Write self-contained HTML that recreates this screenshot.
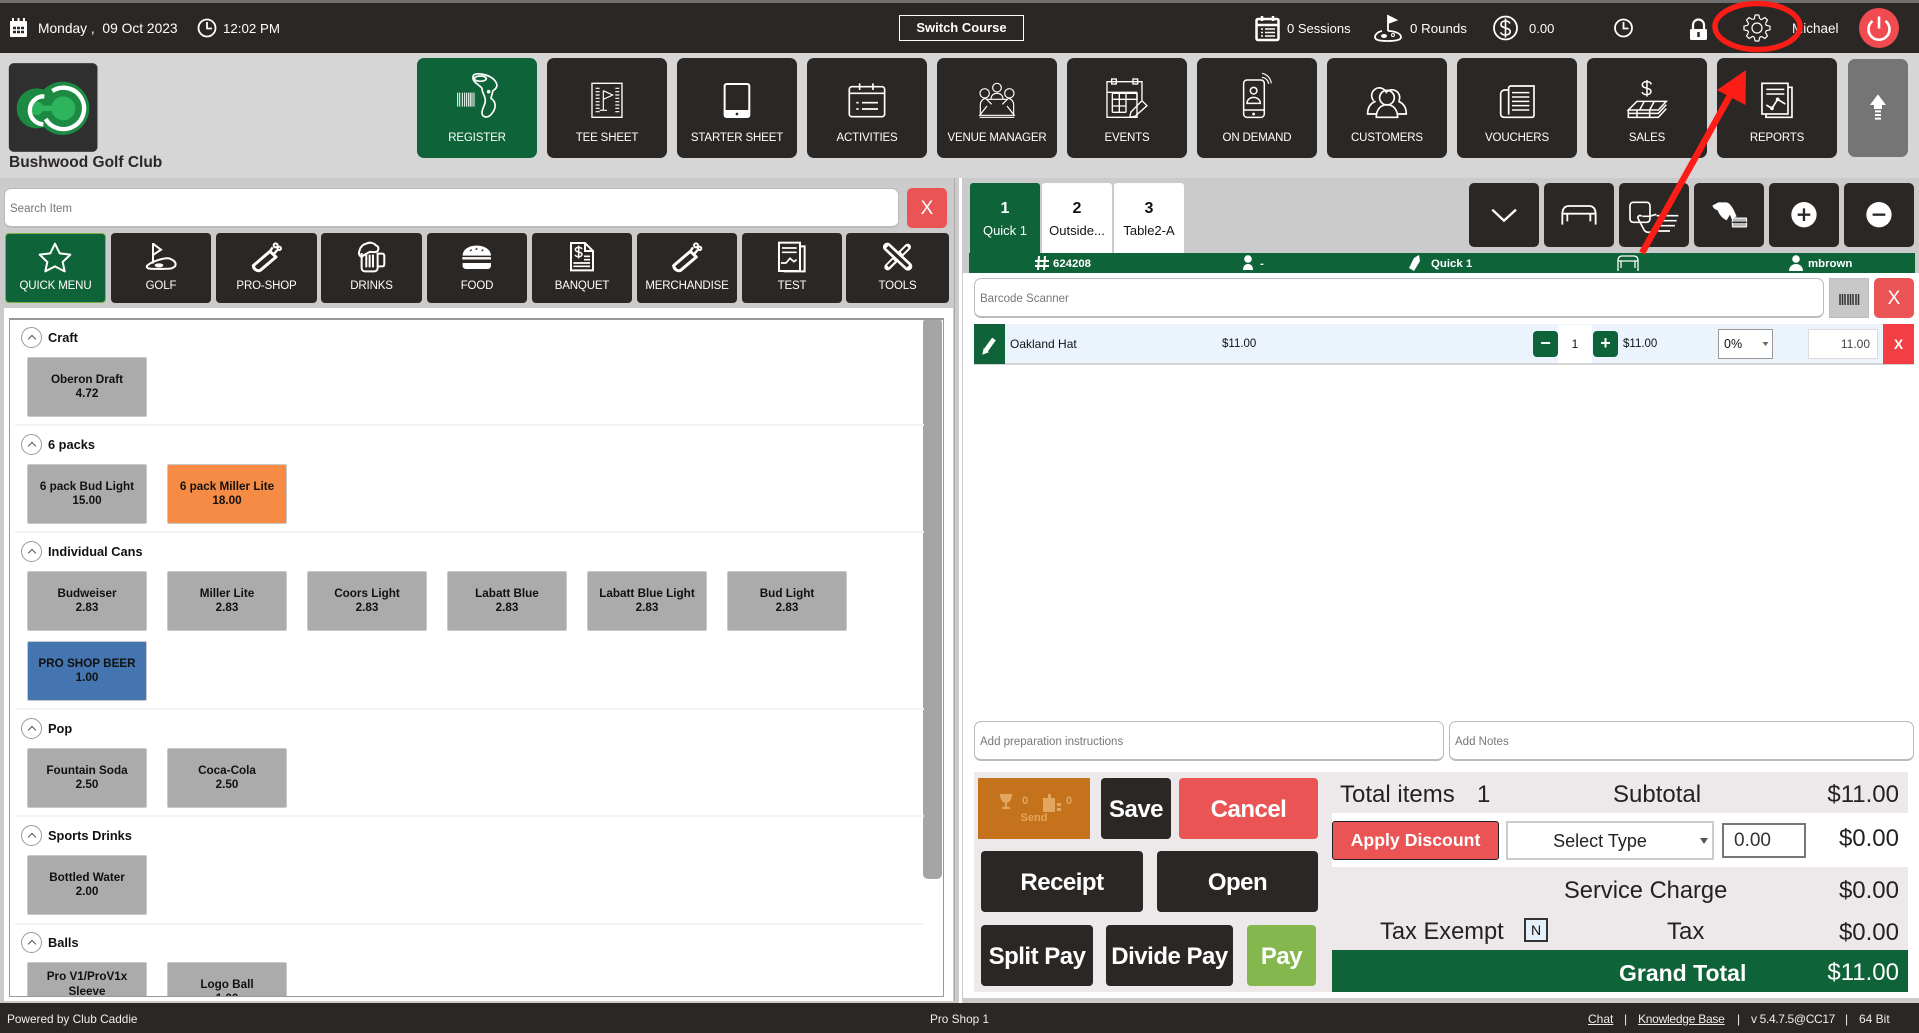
<!DOCTYPE html>
<html><head><meta charset="utf-8"><title>Club Caddie Register</title>
<style>
html,body{margin:0;padding:0;width:1919px;height:1033px;overflow:hidden;background:#cbcbcb;font-family:"Liberation Sans",sans-serif;color:#111}
.a{position:absolute;box-sizing:border-box}
.t{position:absolute;white-space:pre;line-height:20px;height:20px}
.c{text-align:center}
.w{color:#fff !important}
.dk{background:#2b2725;border-radius:5px}
.nav{position:absolute;top:58px;width:120px;height:100px;background:#2b2725;border-radius:7px;color:#fff;font-size:11.5px;letter-spacing:-.15px;text-align:center;line-height:20px;padding-top:70px;box-sizing:border-box}
.cat{position:absolute;top:233px;height:70px;background:#2b2725;border-radius:4px;color:#fff;font-size:11.5px;letter-spacing:-.15px;text-align:center;line-height:20px;padding-top:43px;box-sizing:border-box}
.it{position:absolute;width:120px;height:60px;margin-top:1px;background:#ababab;border:1px solid #c8c8c8;border-radius:2px;font-weight:bold;font-size:11.7px;line-height:14.5px;text-align:center;display:flex;align-items:center;justify-content:center;box-sizing:border-box}
.h{position:absolute;left:39px;font-weight:bold;font-size:12.8px;line-height:20px;height:20px;white-space:pre}
.cir{position:absolute;left:12px;width:21px;height:21px;border:1px solid #999;border-radius:50%;box-sizing:border-box}
.cir:after{content:"";position:absolute;left:6.5px;top:8px;width:5px;height:5px;border-left:1px solid #555;border-top:1px solid #555;transform:rotate(45deg)}
.sep{position:absolute;left:6px;width:909px;height:2px;margin-top:1px;background:#f2f2f2}
.big{position:absolute;color:#fff;font-weight:bold;font-size:24px;letter-spacing:-.5px;text-align:center;border-radius:4px;box-sizing:border-box;display:flex;align-items:center;justify-content:center;white-space:pre;padding-top:3px}
.tot{position:absolute;font-size:24px;line-height:30px;height:30px;white-space:pre;color:#222}
.r{text-align:right}
.inp{position:absolute;background:#fff;border:1px solid #bbb;border-bottom:2px solid #bbb;border-radius:7px;box-sizing:border-box;font-size:11.5px;color:#777;padding-left:5px;padding-top:2px;display:flex;align-items:center}
</style></head><body>

<div class="a" style="left:0;top:0;width:1919px;height:3px;background:#6f6f6f"></div>
<div class="a" style="left:0;top:3px;width:1919px;height:50px;background:#2b2725"></div>
<div class="a" style="left:0;top:53px;width:1919px;height:125px;background:#d6d6d6"></div>
<div class="a" style="left:0;top:1003px;width:1919px;height:30px;background:#2b2725"></div>

<!-- header text -->
<div class="t w" style="left:38px;top:19px;font-size:13.8px">Monday ,  09 Oct 2023</div>
<div class="t w" style="left:223px;top:19px;font-size:13.3px">12:02 PM</div>
<div class="a w c" style="left:899px;top:15px;width:125px;height:26px;border:1px solid #fff;font-weight:bold;font-size:13px;line-height:24px">Switch Course</div>
<div class="t w" style="left:1287px;top:19px;font-size:13px">0 Sessions</div>
<div class="t w" style="left:1410px;top:19px;font-size:13.3px">0 Rounds</div>
<div class="t w" style="left:1529px;top:19px;font-size:13px">0.00</div>
<div class="t w" style="left:1792px;top:19px;font-size:13.5px">Michael</div>

<!-- logo -->
<div class="t" style="left:9px;top:153px;font-weight:bold;font-size:15.5px;color:#2b2725">Bushwood Golf Club</div>

<!-- nav -->
<div class="nav" style="left:417px;background:#0f6339">REGISTER</div>
<div class="nav" style="left:547px">TEE SHEET</div>
<div class="nav" style="left:677px">STARTER SHEET</div>
<div class="nav" style="left:807px">ACTIVITIES</div>
<div class="nav" style="left:937px">VENUE MANAGER</div>
<div class="nav" style="left:1067px">EVENTS</div>
<div class="nav" style="left:1197px">ON DEMAND</div>
<div class="nav" style="left:1327px">CUSTOMERS</div>
<div class="nav" style="left:1457px">VOUCHERS</div>
<div class="nav" style="left:1587px">SALES</div>
<div class="nav" style="left:1717px">REPORTS</div>
<div class="a" style="left:1848px;top:59px;width:60px;height:98px;background:#757575;border-radius:7px"></div>

<!-- search -->
<div class="inp" style="left:4px;top:188px;width:895px;height:40px">Search Item</div>
<div class="a w c" style="left:907px;top:188px;width:40px;height:40px;background:#ea5455;border-radius:5px;font-size:19px;line-height:41px">X</div>

<!-- categories -->
<div class="cat" style="left:5px;width:101px;background:#0f6339;border:1px solid #7cb342;padding-top:42px">QUICK MENU</div>
<div class="cat" style="left:111px;width:100px">GOLF</div>
<div class="cat" style="left:216px;width:101px">PRO-SHOP</div>
<div class="cat" style="left:321px;width:101px">DRINKS</div>
<div class="cat" style="left:427px;width:100px">FOOD</div>
<div class="cat" style="left:532px;width:100px">BANQUET</div>
<div class="cat" style="left:637px;width:100px">MERCHANDISE</div>
<div class="cat" style="left:742px;width:100px">TEST</div>
<div class="cat" style="left:846px;width:103px">TOOLS</div>

<!-- left panel -->
<div class="a" style="left:4px;top:308px;width:949px;height:693px;background:#fff"></div>
<div class="a" style="left:954px;top:178px;width:1px;height:823px;background:#aaa"></div>
<div class="a" style="left:959px;top:178px;width:3px;height:825px;background:#fff"></div>
<div class="a" style="left:9px;top:318px;width:935px;height:679px;border:1px solid #999;border-top:2px solid #999;overflow:hidden;background:#fff">
 <div class="a" style="left:-1px;top:-2px;width:935px;height:679px">
  <div class="a" style="left:914px;top:0;width:19px;height:561px;background:#a5a5a5;border-radius:5px"></div>
  <div class="cir" style="top:9px"></div><div class="h" style="top:10px">Craft</div>
  <div class="it" style="left:18px;top:38px">Oberon Draft<br>4.72</div>
  <div class="sep" style="top:105px"></div>

  <div class="cir" style="top:116px"></div><div class="h" style="top:117px">6 packs</div>
  <div class="it" style="left:18px;top:145px">6 pack Bud Light<br>15.00</div>
  <div class="it" style="left:158px;top:145px;background:#f68b45">6 pack Miller Lite<br>18.00</div>
  <div class="sep" style="top:212px"></div>

  <div class="cir" style="top:223px"></div><div class="h" style="top:224px">Individual Cans</div>
  <div class="it" style="left:18px;top:252px">Budweiser<br>2.83</div>
  <div class="it" style="left:158px;top:252px">Miller Lite<br>2.83</div>
  <div class="it" style="left:298px;top:252px">Coors Light<br>2.83</div>
  <div class="it" style="left:438px;top:252px">Labatt Blue<br>2.83</div>
  <div class="it" style="left:578px;top:252px">Labatt Blue Light<br>2.83</div>
  <div class="it" style="left:718px;top:252px">Bud Light<br>2.83</div>
  <div class="it" style="left:18px;top:322px;background:#4475b0">PRO SHOP BEER<br>1.00</div>
  <div class="sep" style="top:389px"></div>

  <div class="cir" style="top:400px"></div><div class="h" style="top:401px">Pop</div>
  <div class="it" style="left:18px;top:429px">Fountain Soda<br>2.50</div>
  <div class="it" style="left:158px;top:429px">Coca-Cola<br>2.50</div>
  <div class="sep" style="top:496px"></div>

  <div class="cir" style="top:507px"></div><div class="h" style="top:508px">Sports Drinks</div>
  <div class="it" style="left:18px;top:536px">Bottled Water<br>2.00</div>
  <div class="sep" style="top:604px"></div>

  <div class="cir" style="top:614px"></div><div class="h" style="top:615px">Balls</div>
  <div class="it" style="left:18px;top:643px">Pro V1/ProV1x<br>Sleeve<br>1.00</div>
  <div class="it" style="left:158px;top:643px">Logo Ball<br>1.00</div>
 </div>
</div>

<!-- order tabs -->
<div class="a c w" style="left:970px;top:183px;width:70px;height:70px;background:#0f6339;border-radius:3px 3px 0 0"><div style="font-weight:bold;font-size:16px;line-height:20px;margin-top:16px">1</div><div style="font-size:13px;line-height:20px;margin-top:2px">Quick 1</div></div>
<div class="a c" style="left:1042px;top:183px;width:70px;height:70px;background:#fff;border-radius:3px 3px 0 0"><div style="font-weight:bold;font-size:16px;line-height:20px;margin-top:16px">2</div><div style="font-size:13px;line-height:20px;margin-top:2px">Outside...</div></div>
<div class="a c" style="left:1114px;top:183px;width:70px;height:70px;background:#fff;border-radius:3px 3px 0 0"><div style="font-weight:bold;font-size:16px;line-height:20px;margin-top:16px">3</div><div style="font-size:13px;line-height:20px;margin-top:2px">Table2-A</div></div>

<div class="a dk" style="left:1469px;top:183px;width:70px;height:64px"></div>
<div class="a dk" style="left:1544px;top:183px;width:70px;height:64px"></div>
<div class="a dk" style="left:1619px;top:183px;width:70px;height:64px"></div>
<div class="a dk" style="left:1694px;top:183px;width:70px;height:64px"></div>
<div class="a dk" style="left:1769px;top:183px;width:70px;height:64px"></div>
<div class="a dk" style="left:1844px;top:183px;width:70px;height:64px"></div>

<!-- right panel -->
<div class="a" style="left:963px;top:273px;width:956px;height:725px;background:#fff"></div>
<div class="a" style="left:969px;top:253px;width:946px;height:20px;background:#0f6339"></div>
<div class="t w" style="left:1053px;top:254px;font-weight:bold;font-size:11.4px">624208</div>
<div class="t w" style="left:1260px;top:254px;font-weight:bold;font-size:11.4px">-</div>
<div class="t w" style="left:1431px;top:254px;font-weight:bold;font-size:11.4px">Quick 1</div>
<div class="t w" style="left:1808px;top:254px;font-weight:bold;font-size:11.4px">mbrown</div>

<div class="inp" style="left:974px;top:278px;width:850px;height:40px">Barcode Scanner</div>
<div class="a" style="left:1829px;top:278px;width:40px;height:40px;background:#c8c8c8;border:1px solid #bbb"></div>
<div class="a w c" style="left:1874px;top:278px;width:40px;height:40px;background:#ea5455;border-radius:5px;font-size:19px;line-height:41px">X</div>

<div class="a" style="left:974px;top:324px;width:940px;height:41px;background:#ebf4fc;border-bottom:2px solid #d5d5d5"></div>
<div class="a" style="left:974px;top:324px;width:31px;height:40px;background:#0f6339"></div>
<div class="t" style="left:1010px;top:334px;font-size:12px">Oakland Hat</div>
<div class="t" style="left:1222px;top:334px;font-size:11.5px">$11.00</div>
<div class="a" style="left:1558px;top:325px;width:34px;height:38px;background:#fff"></div>
<div class="a w c" style="left:1533px;top:331px;width:25px;height:26px;background:#0f6339;border-radius:4px;font-weight:bold;font-size:18px;line-height:24px">&#8722;</div>
<div class="a w c" style="left:1593px;top:331px;width:25px;height:26px;background:#0f6339;border-radius:4px;font-weight:bold;font-size:18px;line-height:24px">+</div>
<div class="t c" style="left:1558px;top:334px;width:34px;font-size:12px">1</div>
<div class="t" style="left:1623px;top:334px;font-size:11.5px">$11.00</div>
<div class="a" style="left:1718px;top:329px;width:55px;height:30px;background:#fff;border:1px solid #999;font-size:12.5px;line-height:28px;padding-left:5px">0%</div>
<div class="a r" style="left:1808px;top:329px;width:70px;height:30px;background:#fff;border:1px solid #ddd;font-size:12px;line-height:28px;padding-right:7px;color:#444">11.00</div>
<div class="a w c" style="left:1883px;top:324px;width:31px;height:40px;background:#f33e44;font-weight:bold;font-size:14px;line-height:40px">X</div>

<div class="inp" style="left:974px;top:721px;width:470px;height:40px">Add preparation instructions</div>
<div class="inp" style="left:1449px;top:721px;width:465px;height:40px">Add Notes</div>

<!-- totals -->
<div class="a" style="left:974px;top:772px;width:934px;height:220px;background:#ede9ea"></div>
<div class="a" style="left:1332px;top:813px;width:576px;height:54px;background:#fff"></div>
<div class="big" style="left:978px;top:778px;width:112px;height:61px;background:#c4721c;font-size:11px;align-items:flex-end;padding-top:0;padding-bottom:15px;color:#e2a65e;letter-spacing:0;border-radius:1px">Send</div>
<div class="t" style="left:1022px;top:791px;font-size:11px;font-weight:bold;color:#e2a65e">0</div>
<div class="t" style="left:1066px;top:791px;font-size:11px;font-weight:bold;color:#e2a65e">0</div>
<div class="big" style="left:1101px;top:778px;width:70px;height:61px;background:#2b2725">Save</div>
<div class="big" style="left:1179px;top:778px;width:139px;height:61px;background:#ea5455">Cancel</div>
<div class="big" style="left:981px;top:851px;width:162px;height:61px;background:#2b2725">Receipt</div>
<div class="big" style="left:1157px;top:851px;width:161px;height:61px;background:#2b2725">Open</div>
<div class="big" style="left:981px;top:925px;width:112px;height:61px;background:#2b2725">Split Pay</div>
<div class="big" style="left:1106px;top:925px;width:127px;height:61px;background:#2b2725">Divide Pay</div>
<div class="big" style="left:1247px;top:925px;width:69px;height:61px;background:#84b74e">Pay</div>

<div class="tot" style="left:1340px;top:780px">Total items</div>
<div class="tot" style="left:1477px;top:780px">1</div>
<div class="tot" style="left:1613px;top:780px">Subtotal</div>
<div class="tot r" style="left:1799px;top:780px;width:100px">$11.00</div>

<div class="a w c" style="left:1332px;top:821px;width:167px;height:39px;background:#ea5455;border:1px solid #222;border-radius:3px;font-weight:bold;font-size:17.7px;line-height:37px">Apply Discount</div>
<div class="a c" style="left:1506px;top:821px;width:208px;height:39px;background:#fff;border:2px solid #ccc;font-size:18px;line-height:36px;padding-right:20px;color:#222">Select Type</div>
<div class="a" style="left:1722px;top:823px;width:84px;height:35px;background:#fff;border:2px solid #777;font-size:19px;line-height:32px;padding-left:10px;color:#333">0.00</div>
<div class="tot r" style="left:1799px;top:824px;width:100px">$0.00</div>

<div class="tot" style="left:1564px;top:876px;font-size:23.7px">Service Charge</div>
<div class="tot r" style="left:1799px;top:876px;width:100px">$0.00</div>
<div class="tot" style="left:1380px;top:917px;font-size:23.7px">Tax Exempt</div>
<div class="a c" style="left:1524px;top:918px;width:24px;height:24px;background:#e6f0fb;border:2px solid #333;font-size:14px;line-height:20px">N</div>
<div class="tot" style="left:1667px;top:917px">Tax</div>
<div class="tot r" style="left:1799px;top:918px;width:100px">$0.00</div>
<div class="a" style="left:1332px;top:950px;width:576px;height:42px;background:#0f6339"></div>
<div class="tot w" style="left:1619px;top:958px;font-weight:bold;font-size:23px">Grand Total</div>
<div class="tot r w" style="left:1799px;top:958px;width:100px">$11.00</div>

<!-- footer -->
<div class="t" style="left:7px;top:1009px;font-size:11.8px;color:#eee">Powered by Club Caddie</div>
<div class="t" style="left:930px;top:1009px;font-size:11.8px;color:#eee">Pro Shop 1</div>
<div class="t" style="left:1588px;top:1009px;font-size:12px;color:#eee;text-decoration:underline">Chat</div>
<div class="t" style="left:1624px;top:1009px;font-size:12px;color:#eee">|</div>
<div class="t" style="left:1638px;top:1009px;font-size:12px;color:#eee;text-decoration:underline;letter-spacing:-.25px">Knowledge Base</div>
<div class="t" style="left:1737px;top:1009px;font-size:12px;color:#eee">|</div>
<div class="t" style="left:1751px;top:1009px;font-size:12px;color:#eee;letter-spacing:-.35px">v 5.4.7.5@CC17</div>
<div class="t" style="left:1845px;top:1009px;font-size:12px;color:#eee">|</div>
<div class="t" style="left:1859px;top:1009px;font-size:12px;color:#eee">64 Bit</div>

<!-- icons -->
<svg class="a" style="left:0;top:0" width="1919" height="1033" viewBox="0 0 1919 1033" fill="none" stroke="#fff">
 <!-- header icons -->
 <g>
  <rect x="10" y="21" width="17" height="16" rx="1" fill="#fff" stroke="none"/>
  <path d="M13 18v5M18.500 18v5M24 18v5" stroke-width="2"/>
  <path d="M13 28h3M17 28h3M21 28h3M13 32h3M17 32h3M21 32h3" stroke="#2b2725" stroke-width="2.500"/>
  <circle cx="207" cy="28" r="8.500" stroke-width="1.800"/><path d="M207 22v6.500h5" stroke-width="1.800"/>
  <rect x="1256.500" y="19" width="22" height="21" rx="1.500" stroke-width="2.500"/>
  <path d="M1262 16v5M1273 16v5M1256 25h23" stroke-width="2.500"/>
  <path d="M1261 29h2M1265 29h10M1261 32.500h2M1265 32.500h10M1261 36h2M1265 36h10" stroke-width="1.600"/>
  <path d="M1388 31V16l8 4-8 3" stroke-width="1.800"/><path d="M1388 16l8 4-8 3z" fill="#fff"/>
  <path d="M1382 31c-5 1-7 4-7 6 0 3 4 4 12 4 9 0 14-1 14-4 0-3-5-6-13-6" stroke-width="1.800"/>
  <ellipse cx="1384" cy="36" rx="3" ry="2" fill="#fff" stroke="none"/><circle cx="1393" cy="35" r="1.500" stroke-width="1"/>
  <circle cx="1505.500" cy="28" r="11.500" stroke-width="1.800"/>
  <path d="M1510 23.500c-1-2-3-2.500-4.500-2.500-2.500 0-4.500 1.300-4.500 3.500 0 4.500 9.200 2.500 9.200 7 0 2.200-2.200 3.500-4.700 3.500-2 0-4-.7-5-2.700M1505.500 18.500v19" stroke-width="1.600"/>
  <circle cx="1623.500" cy="28" r="8.500" stroke-width="1.800"/><path d="M1623.500 22v6.500h5" stroke-width="1.800"/>
  <rect x="1690" y="29" width="17" height="11" rx="1.500" fill="#fff" stroke="none"/>
  <path d="M1693 29v-4a5.500 5.500 0 0 1 11 0v4" stroke-width="2.200"/>
  <path d="M1698.500 32v5" stroke="#2b2725" stroke-width="2.500"/>
  <g transform="translate(1757 28)" stroke-width="1.200">
   <circle r="9.500" stroke-dasharray="1.860 5.600" stroke-dashoffset="-2.800"/><circle r="5"/>
   <path d="M-2.800-9.100L-1.800-13H1.800L2.800-9.100" transform="rotate(90)"/>
   <path d="M-2.800-9.100L-1.800-13H1.800L2.800-9.100" transform="rotate(45)"/>
   <path d="M-2.800-9.100L-1.800-13H1.800L2.800-9.100"/>
   <path d="M-2.800-9.100L-1.800-13H1.800L2.800-9.100" transform="rotate(135)"/>
   <path d="M-2.800-9.100L-1.800-13H1.800L2.800-9.100" transform="rotate(180)"/>
   <path d="M-2.800-9.100L-1.800-13H1.800L2.800-9.100" transform="rotate(225)"/>
   <path d="M-2.800-9.100L-1.800-13H1.800L2.800-9.100" transform="rotate(270)"/>
   <path d="M-2.800-9.100L-1.800-13H1.800L2.800-9.100" transform="rotate(315)"/>
  </g>
  <circle cx="1879" cy="28" r="20" fill="#f04b50" stroke="none"/>
  <path d="M1872.500 21a10.500 10.500 0 1 0 13 0" stroke-width="2.600"/><path d="M1879 16.500v12" stroke-width="2.600"/>
 </g>

 <!-- logo -->
 <g transform="scale(.3333) translate(0 165)">
  <rect x="27" y="25" width="265" height="265" rx="14" fill="#2f2f2f" stroke="#2f2f2f" stroke-width="1"/>
  <circle cx="110" cy="160" r="60" fill="#1c8a43" stroke="none"/><circle cx="188" cy="160" r="80" fill="#1c8a43" stroke="none"/>
  <circle cx="110" cy="160" r="20" fill="#2db45d" stroke="none"/><circle cx="190" cy="160" r="36" fill="#2db45d" stroke="none"/>
  <path d="M110 152h50v16h-50z" fill="#2db45d" stroke="none"/>
  <path d="M133 124a42 42 0 1 0-3 84" stroke-width="13"/>
  <path d="M157 108a62 62 0 1 1-20 84" stroke-width="13"/>
 </g>

 <!-- nav row 1 -->
 <g transform="translate(417 60) scale(.3333)" stroke-width="5">
  <path d="M122 98v42M128 98v42M136 98v42M143 98v42M149 98v42M155 98v42M160 98v42M165 98v42M171 98v42" stroke-width="3"/>
  <path d="M170 45C180 38 215 42 232 60 245 75 240 85 228 92L222 115C238 125 238 145 225 160 215 175 195 175 195 158 195 145 205 135 205 122 205 105 195 100 195 85 190 75 165 68 168 50Z"/>
  <ellipse cx="190" cy="56" rx="18" ry="8"/><circle cx="215" cy="95" r="3" fill="#fff"/>
  <g transform="translate(390 0)">
   <path d="M135 70h90v102h-90zM135 70v102" stroke-width="4"/>
   <path d="M146 85h12M146 95h12M146 105h12M146 115h12M146 125h12M146 135h12M146 145h12M146 155h12M205 85h12M205 95h12M205 105h12M205 115h12M205 125h12M205 135h12M205 145h12M205 155h12" stroke-width="3.500"/>
   <path d="M169 92v58M158 151h22M169 92l28 13-28 13" stroke-width="3.500"/>
  </g>
  <rect x="923" y="72" width="74" height="99" rx="6" stroke-width="6"/>
  <rect x="921" y="150" width="78" height="22" rx="4" fill="#fff" stroke="none"/><circle cx="960" cy="162" r="4" fill="#2b2725" stroke="none"/>
  <rect x="1297" y="80" width="106" height="90" rx="8" stroke-width="5"/>
  <path d="M1297 100h106M1328 70v20M1368 70v20"/>
  <path d="M1318 128h7M1335 128h48M1318 147h7M1335 147h48" stroke-width="5"/>
 </g>

 <!-- nav row 2 -->
 <g transform="translate(937 60) scale(.3333)" stroke-width="3.500">
  <circle cx="180" cy="83" r="13"/><circle cx="143" cy="100" r="14"/><circle cx="217" cy="100" r="14"/>
  <path d="M162 118c0-12 8-18 18-18s18 6 18 18M130 165v-30c0-10 6-18 16-20l18 18M230 165v-30c0-10-6-18-16-20l-18 18"/>
  <path d="M150 138l-22 28h104l-22-28M128 172h104M150 118h60"/>
  <g stroke-width="4">
   <path d="M600 97V172H510V65h105v55M510 97h90M538 65h50"/>
   <rect x="524" y="57" width="14" height="15"/><rect x="588" y="57" width="14" height="15"/>
   <path d="M526 100v57M547 100v57M567 100v57M526 100h74v18h-74M526 118h60M526 138h41M526 157h41" />
   <path d="M615 122l15 15-36 32-16 3 4-16z"/>
  </g>
  <g stroke-width="4.500">
   <rect x="920" y="60" width="62" height="112" rx="10"/>
   <circle cx="950" cy="92" r="10"/><path d="M930 130a20 18 0 0 1 40 0zM920 150h62"/>
   <circle cx="950" cy="162" r="2" fill="#fff"/>
   <path d="M975 52a22 22 0 0 1 20 20M975 40a34 34 0 0 1 28 30" stroke-width="3.500"/>
  </g>
  <g stroke-width="5">
   <path d="M1310 122a23 23 0 1 1 38-25 23 23 0 0 1 38 25"/>
   <circle cx="1350" cy="113" r="22"/>
   <path d="M1318 172c0-22 12-38 32-38s32 16 32 38zM1318 162h-26c0-20 8-32 24-38M1382 162h26c0-20-8-32-24-38"/>
  </g>
 </g>

 <!-- nav row 3 -->
 <g transform="translate(1457 60) scale(.3333)" stroke-width="5">
  <path d="M155 172h70a6 6 0 0 0 6-6V78h-70a6 6 0 0 0-6 6v80M148 172h7M155 90h-12a12 12 0 0 0-12 12v60a10 10 0 0 0 10 10h10"/>
  <path d="M165 98h52M165 111h52M165 124h52M165 137h52M165 150h52" stroke-width="4.500"/>
  <path d="M583 73c-2-6-8-8-14-8-8 0-13 4-13 10 0 12 26 7 26 19 0 6-6 10-13 10-6 0-12-3-14-8M570 60v50" stroke-width="4.500"/>
  <path d="M540 124h88l-24 26h-90zM562 124l-14 26M592 124l-14 26M514 150v10h90l24-26M514 161v11h90l24-26M540 150v22h38v-22" stroke-width="4.500"/>
  <rect x="915" y="70" width="78" height="92" stroke-width="5"/>
  <path d="M993 82h12v90h-78v-10"/>
  <path d="M928 88h54M928 102h54" stroke-width="4.500"/>
  <path d="M928 135l17 10 17-27 23 14" stroke-width="5"/><circle cx="945" cy="145" r="3" fill="#fff"/><circle cx="962" cy="118" r="3" fill="#fff"/>
  <path d="M1263 103l24 32h-12v12h-24v-12h-12z" fill="#fff" stroke="none"/>
  <path d="M1254 154h18M1254 165h18M1254 176h18" stroke-width="6"/>
 </g>

 <!-- category 1 -->
 <g transform="translate(5 233) scale(.3333)" stroke-width="5.500">
  <path d="M150 32l14 29 32 4-23 22 6 28-29-15-29 15 6-28-23-22 32-4z" stroke-linejoin="round" stroke-width="6"/>
  <path d="M444 30v62M444 32l24 18-24 16" stroke-width="6"/>
  <path d="M430 95c10-8 50-24 65-18 20 8 23 22 5 29-5 2-60 2-65 1-10-1-13-7-5-12z" stroke-width="6"/>
  <ellipse cx="462" cy="97" rx="13" ry="6" fill="#fff" stroke="none"/>
  <path d="M745 98l50-43 18 17-47 40c-10 4-20-4-21-14z" stroke-width="9" stroke-linejoin="round"/>
  <path d="M795 55l8-12M805 65l12-14" stroke-width="7"/>
  <circle cx="812" cy="37" r="6" stroke-width="6"/><circle cx="823" cy="46" r="5" stroke-width="6"/>
  <path d="M1070 60v45c0 6 4 10 10 10h28c6 0 10-4 10-10V60M1118 62h14c4 0 6 3 6 6v26c0 4-2 6-6 6h-14M1084 65v38M1094 65v38M1104 65v38" stroke-width="6"/>
  <path d="M1070 72c-8-4-10-12-6-20 2-10 10-18 20-20 10-6 24-2 30 6 8 2 8 12 2 18-10 4-20-2-24 2-6 4-14 6-22 14z" stroke-width="6"/>
  <path d="M1373 68c0-18 18-30 42-30s43 12 43 30z" fill="#fff" stroke="none"/>
  <path d="M1395 54l5-4M1412 50l5-4M1430 54l5-4" stroke="#2b2725" stroke-width="4"/>
  <path d="M1372 76h86" stroke-width="7"/>
  <path d="M1373 90h85v8c0 6-4 10-10 10h-65c-6 0-10-4-10-10z" fill="#fff" stroke="none"/>
 </g>

 <!-- category 2 -->
 <g transform="translate(530 233) scale(.3333)" stroke-width="6">
  <path d="M123 30h42l24 24v58h-66z"/><path d="M165 30v24h24"/>
  <path d="M156 48c-2-4-6-5-10-5-6 0-10 3-10 7 0 9 20 5 20 14 0 4-4 7-10 7-5 0-9-2-11-5M146 38v38" stroke-width="4.500"/>
  <path d="M162 70h18M162 80h18M130 90h50M130 100h50" stroke-width="5"/>
  <g transform="translate(-314 0)">
   <path d="M745 98l50-43 18 17-47 40c-10 4-20-4-21-14z" stroke-width="9" stroke-linejoin="round"/>
   <path d="M795 55l8-12M805 65l12-14" stroke-width="7"/>
   <circle cx="812" cy="37" r="6" stroke-width="6"/><circle cx="823" cy="46" r="5" stroke-width="6"/>
  </g>
  <rect x="747" y="29" width="63" height="85"/><path d="M810 40h14v75h-60v-1"/>
  <path d="M756 45h44M756 58h44" stroke-width="5"/>
  <path d="M753 90l15 0 12-14 12 10 8-6" stroke-width="5"/>
  <path d="M1072 42l62 58" stroke-width="26" stroke-linecap="round"/>
  <path d="M1133 42l-60 60" stroke-width="20" stroke-linecap="round"/>
  <path d="M1072 42l62 58" stroke="#2b2725" stroke-width="10"/>
  <path d="M1133 42l-18 18M1092 82l-18 18" stroke="#2b2725" stroke-width="8"/>
 </g>

 <!-- order buttons -->
 <g transform="translate(1465 183) scale(.3333)" stroke-width="6">
  <path d="M82 80l35 33 36-33" stroke-width="7"/>
  <path d="M292 125V95Q292 69 312 69H372Q392 69 392 95V125M292 92H392M307 92V115M376 92V115" stroke-width="5.500"/>
  <rect x="495" y="58" width="60" height="60" rx="10" stroke-width="5"/>
  <path d="M530 100c-6-6-14 0-10 8l18 34c4 6 14 8 20 4M532 100l22 0 20-6M575 98h65M585 113h50M585 128h45M580 144h35" stroke-width="5"/>
  <path d="M742 68L760 58H785C800 62 808 85 815 100L800 108 795 95 785 112C770 105 762 92 758 82 750 80 745 75 742 68Z" fill="#fff" stroke="none"/>
  <rect x="802" y="105" width="43" height="27" rx="2" fill="#bbb" stroke="#fff" stroke-width="3"/>
  <path d="M802 118h43" stroke="#2b2725" stroke-width="4"/>
  <circle cx="1017" cy="95" r="38" fill="#fff" stroke="none"/>
  <path d="M998 95h38M1017 76v38" stroke="#2b2725" stroke-width="7"/>
  <circle cx="1242" cy="95" r="38" fill="#fff" stroke="none"/>
  <path d="M1223 95h38" stroke="#2b2725" stroke-width="7"/>
 </g>

 <!-- green bar icons -->
 <g stroke-width="2">
  <path d="M1039 256l-1 14M1045 256l-1 14M1035 261h14M1035 266h14" />
  <circle cx="1248" cy="259" r="3.800" fill="#fff" stroke="none"/><path d="M1243 270c0-4 2-6 5-6s5 2 5 6z" fill="#fff" stroke="none"/>
  <path d="M1414 258l5-3 1 6-6 10-5-3z" fill="#fff" stroke="none"/>
  <path d="M1618 271v-10q0-5 4-5h12q4 0 4 5v10M1618 261h20M1621 261v7M1635 261v7" stroke-width="1.300"/>
  <circle cx="1796" cy="259" r="3.800" fill="#fff" stroke="none"/><path d="M1789 271c0-4 3-7 7-7s7 3 7 7z" fill="#fff" stroke="none"/>
 </g>

 <!-- barcode -->
 <path d="M1840 294v11M1842.500 294v11M1845 294v11M1848 294v11M1850.500 294v11M1853 294v11M1856 294v11M1858.500 294v11" stroke="#333" stroke-width="1.500"/>

 <!-- pencil -->
 <path d="M986 350l8-11" stroke-width="4.500"/><path d="M983 354l1-5 4 3z" fill="#fff" stroke-width="1"/>
 <!-- 0% arrow / select arrow -->
 <path d="M1762.500 342h6l-3 4z" fill="#666" stroke="none"/>
 <path d="M1700 838h8l-4 6z" fill="#555" stroke="none"/>

 <!-- send icons -->
 <g fill="#e2a65e" stroke="none">
  <path d="M1000 794h12c0 5-2 8-5 9v4h3v2h-8v-2h3v-4c-3-1-5-4-5-9z"/>
  <path d="M1043 798h5v-4h3v4h4v14h-12zM1057 803h4v3h-4zM1057 808h4v3h-4z"/>
 </g>
</svg>

<!-- annotation -->
<svg class="a" style="left:0;top:0" width="1919" height="1033" viewBox="0 0 1919 1033" fill="none">
 <ellipse cx="1757.500" cy="26.500" rx="42.500" ry="23" stroke="#fb1d16" stroke-width="5.500"/>
 <path d="M1642 253L1732 92" stroke="#fb1d16" stroke-width="6.500"/>
 <path d="M1746 70L1717 90 1745.500 105z" fill="#fb1d16"/>
</svg>
</body></html>
